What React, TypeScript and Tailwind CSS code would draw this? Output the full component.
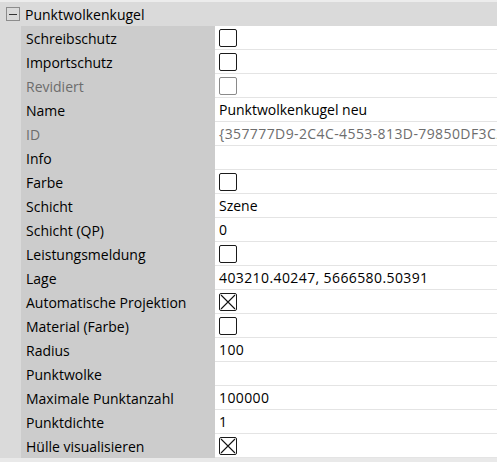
import React from 'react';

type Row = {
  label: string;
  value?: string;
  check?: 'empty' | 'checked';
  muted?: boolean;
  digits?: boolean;
};

const rows: Row[] = [
  { label: 'Schreibschutz', check: 'empty' },
  { label: 'Importschutz', check: 'empty' },
  { label: 'Revidiert', check: 'empty', muted: true },
  { label: 'Name', value: 'Punktwolkenkugel neu' },
  { label: 'ID', value: '{357777D9-2C4C-4553-813D-79850DF3C2A1}', muted: true, digits: true },
  { label: 'Info' },
  { label: 'Farbe', check: 'empty' },
  { label: 'Schicht', value: 'Szene' },
  { label: 'Schicht (QP)', value: '0' },
  { label: 'Leistungsmeldung', check: 'empty' },
  { label: 'Lage', value: '403210.40247, 5666580.50391', digits: true },
  { label: 'Automatische Projektion', check: 'checked' },
  { label: 'Material (Farbe)', check: 'empty' },
  { label: 'Radius', value: '100', digits: true },
  { label: 'Punktwolke' },
  { label: 'Maximale Punktanzahl', value: '100000', digits: true },
  { label: 'Punktdichte', value: '1' },
  { label: 'Hülle visualisieren', check: 'checked' },
];

function CheckBox({ checked, muted }: { checked: boolean; muted?: boolean }) {
  return (
    <div
      className={`w-[18px] h-[18px] rounded-[2px] border ${muted ? 'border-[#8a8a8a]' : 'border-[#1a1a1a]'} bg-white flex items-center justify-center`}
    >
      {checked && (
        <svg width="16" height="16" viewBox="0 0 16 16">
          <path d="M1 1 L15 15 M15 1 L1 15" stroke="#111" strokeWidth="1.1" />
        </svg>
      )}
    </div>
  );
}

export default function App() {
  return (
    <div
      className="w-[497px] h-[462px] bg-[#e9e9e9] overflow-hidden text-[14px] text-black"
      style={{ fontFamily: '"Open Sans", "Noto Sans", sans-serif' }}
    >
      <div className="h-[2px] bg-[#ececec]" />
      <div className="h-[24px] bg-[#dadada] flex items-center">
        <div className="ml-[6px] w-[14px] h-[14px] border border-[#8c8c8c] flex items-center justify-center">
          <div className="w-[8px] h-[1px] bg-[#333]" />
        </div>
        <span className="ml-[5px]">Punktwolkenkugel</span>
      </div>
      <div className="flex bg-[#dadada]">
        <div className="w-[21px] shrink-0" />
        <div className="flex-1 min-w-0">
          {rows.map((r) => (
            <div key={r.label} className="flex h-[24px]">
              <div
                className={`w-[194px] shrink-0 bg-[#cccccc] pl-[5px] flex items-center whitespace-nowrap ${r.muted ? 'text-[#6d6d6d]' : ''}`}
              >
                {r.label}
              </div>
              <div className="flex-1 min-w-0 bg-white border-b border-[#e4e4e4] pl-[4px] flex items-center whitespace-nowrap overflow-hidden">
                {r.check ? (
                  <CheckBox checked={r.check === 'checked'} muted={r.muted} />
                ) : (
                  <span
                    className={`${r.muted ? 'text-[#6d6d6d]' : ''} ${r.digits ? 'tracking-[0.4px]' : ''}`}
                  >
                    {r.value}
                  </span>
                )}
              </div>
            </div>
          ))}
        </div>
      </div>
    </div>
  );
}
